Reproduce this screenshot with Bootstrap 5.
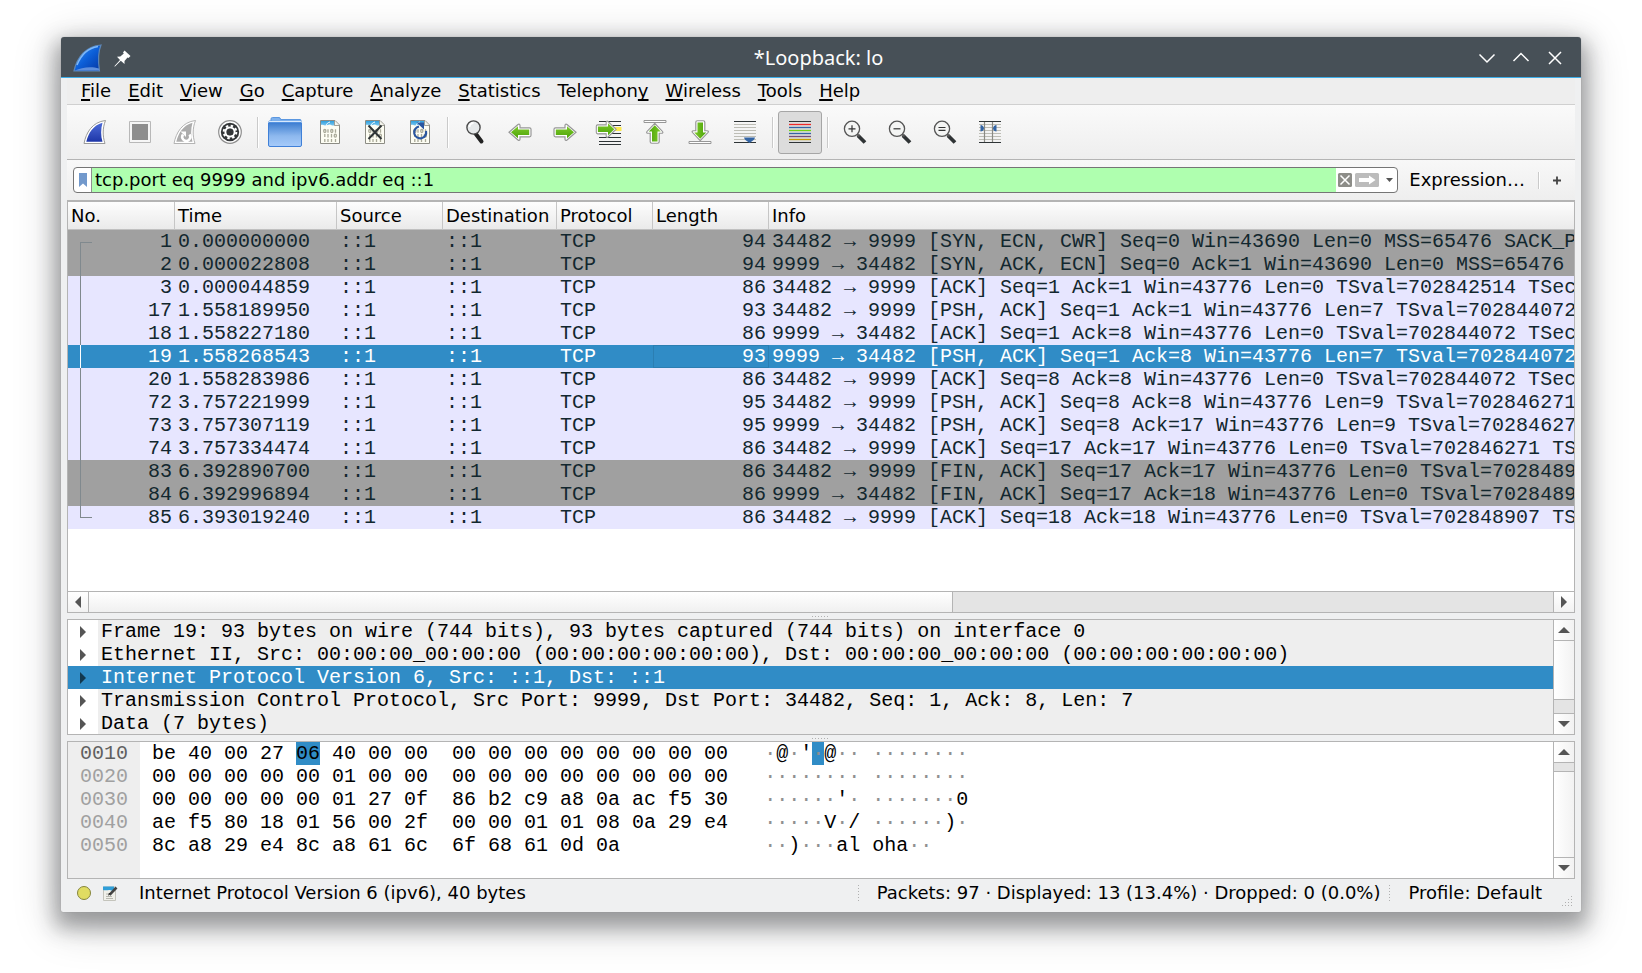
<!DOCTYPE html>
<html lang="en">
<head>
<meta charset="utf-8">
<meta name="viewport" content="width=device-width, initial-scale=1">
<title>*Loopback: lo</title>
<link href="https://cdn.jsdelivr.net/npm/bootstrap@5.3.0/dist/css/bootstrap.min.css" rel="stylesheet">
<style>
  :root { --line: #b4b4b4; --face: #eeeeee; --sel: #308cc6; --mono: "Liberation Mono", monospace; }
  body { background: #fff; color: #000; font: 18px/26px "DejaVu Sans", sans-serif; }
  .desk { height: 100vh; min-height: 800px; padding: 37px 61px 61px; overflow: hidden; }
  .win { background: #eff0f1; border-radius: 4px 4px 2px 2px;
    box-shadow: 0 0 1px #888, 0 10px 20px 6px rgba(35,38,41,.36), 0 10px 44px 4px rgba(35,38,41,.22); }
  .titlebar { height: 41px; background: #475057; border-bottom: 1px solid #3daee9; border-radius: 3px 3px 0 0;
    color: #fcfcfc; font: 20px/40px "Noto Sans", sans-serif; padding: 2px 17px 0 12px; }
  .title-side { width: 108px; gap: 12px; }
  .client { padding: 0 6px 0; }
  .plain { background: none; border: 0; padding: 0; color: inherit; display: inline-flex; align-items: center; justify-content: center; }
  svg { display: block; flex: none; overflow: visible; }

  .menubar { height: 27px; padding-left: 14px; gap: 17px; border-bottom: 1px solid #d0d0d0; background: var(--face); }
  .menubar a { color: #000; text-decoration: none; }
  u { text-decoration: underline 2px; text-underline-offset: 2px; text-decoration-skip-ink: none; }

  .tools { height: 55px; padding-left: 5px; border-bottom: 1px solid var(--line); background: linear-gradient(#fafafa, #eeeeee); }
  .tools button { width: 45px; height: 43px; }
  .tools .pressed { background: #dcdcdc; border: 1px solid #a6a6a6; border-radius: 3px; width: 44px; margin-left: 1px; }
  .vsep { width: 10px; height: 31px; background: linear-gradient(#cacaca, #cacaca) 5px 0/1px 100% no-repeat, linear-gradient(#fff, #fff) 6px 0/1px 100% no-repeat; }

  .filterbar { height: 41px; padding: 0 6px; border-bottom: 1px solid var(--line); background: linear-gradient(#f8f8f8, #eeeeee); }
  .filterbar .vsep { height: 17px; margin-right: 10px; }
  .filterbox { height: 26px; border: 1px solid #757575; border-radius: 4px; background: #fff; overflow: hidden; margin-right: 11px; }
  .filterbox .mark-btn { width: 18px; height: 24px; border-right: 1px solid #909090; }
  .filterbox input { height: 24px; border: 0; outline: 0; padding: 0 0 0 3px; background: #afffaf; min-width: 0; color: #000; }
  .filterbox .ends { width: 61px; gap: 3px; padding-left: 2px; }

  .pane { border: 1px solid var(--line); }
  .packets { table-layout: fixed; border-collapse: separate; border-spacing: 0; font: 20px/23px var(--mono); }
  .packets th { height: 28px; padding: 0 3px; font: 18px/27px "DejaVu Sans", sans-serif; color: #000;
    border-right: 1px solid #c6c6c6; border-bottom: 1px solid #c0c0c0; background: linear-gradient(#fdfdfd, #eaeaea); white-space: nowrap; }
  .packets th:last-child { border-right: 0; }
  .packets td { height: 23px; padding: 0 3px; color: #12272e; background: #e7e6ff; white-space: pre; overflow: hidden; }
  .packets .dim td { background: #a0a0a0; }
  .packets .sel td { background: var(--sel); color: #fff; }
  .packets .sel td:nth-child(6) { box-shadow: inset 0 0 0 1px #2b7eb2; }
  .packets td:first-child, .packets td:nth-child(6) { text-align: right; }
  .packets td:first-child { position: relative; }
  .packets td:first-child::before { content: ""; position: absolute; left: 12px; top: 0; height: 100%; width: 12px; border-left: 1px solid #80898e; }
  .packets tr:first-child td:first-child::before { top: 50%; height: 50%; border-top: 1px solid #80898e; }
  .packets tr:last-child td:first-child::before { height: 50%; border-bottom: 1px solid #80898e; }
  .packets .sel td:first-child::before { border-color: #fff; }

  .hbar { height: 21px; border-top: 1px solid var(--line); background: #e4e4e4; }
  .hbar button { width: 20px; height: 20px; background: linear-gradient(#fff, #f2f2f2); }
  .hbar .thumb { flex: 59 0 0; background: linear-gradient(#fff, #f0f0f0); border-left: 1px solid var(--line); border-right: 1px solid var(--line); }
  .hbar .track { flex: 41 0 0; border-right: 1px solid var(--line); }
  .vbar { flex: none; width: 21px; border-left: 1px solid var(--line); background: #e4e4e4; }
  .vbar button { width: 20px; height: 20px; background: linear-gradient(90deg, #fff, #f2f2f2); }
  .vbar .thumb { background: linear-gradient(90deg, #fff, #f2f2f2); border: solid var(--line); border-width: 1px 0; }
  .vbar .rest { height: 14px; border-bottom: 1px solid var(--line); }
  .vbar .rest-top { height: 9px; border-top: 1px solid var(--line); }

  .grip { height: 6px; }
  .grip i { width: 18px; height: 1px; background: repeating-linear-gradient(90deg, #b0b0b0 0 1px, transparent 1px 3px); }

  .tree { height: 116px; font: 20px/23px var(--mono); background: var(--face); overflow: hidden; }
  .tree .rows button { display: flex; width: 100%; height: 23px; justify-content: flex-start; white-space: pre; }
  .tree .tick { width: 30px; height: 23px; padding-left: 12px; background: #fff; margin-right: 3px; }
  .tree .sel { background: var(--sel); color: #fff; }
  .tree .sel .tick { background: none; }

  .hexpane { height: 138px; background: #fff; }
  .hexpane pre { font: 20px/23px var(--mono); margin: 0; overflow: hidden; color: #000; }
  .hexpane .offs { width: 72px; padding-left: 12px; background: var(--face); color: #a0a0a0; }
  .hexpane .offs b { font-weight: 400; color: #606060; }
  .hexpane .bytes { padding-left: 12px; }
  .hexpane .ascii { padding-left: 36px; }
  .hexpane em { font-style: normal; background: var(--sel); display: inline-block; height: 23px; vertical-align: top; }
  .hexpane s { text-decoration: none; color: #909090; }

  .statusbar { height: 33px; padding: 0 2px 5px 10px; }
  .statusbar .note-btn { margin: 0 21px 0 12px; }
  .statusbar .dotsep { margin: 0 18px 0 9px; width: 1px; height: 17px; background: repeating-linear-gradient(#b0b0b0 0 1px, transparent 1px 3px); }
  .statusbar .size-grip { margin-left: 20px; }
</style>
</head>
<body>
<svg width="0" height="0" class="position-absolute" aria-hidden="true">
  <defs>
    <linearGradient id="gFin" x1="0" y1="0" x2="1" y2="1"><stop offset="0" stop-color="#3f95f5"/><stop offset=".5" stop-color="#0c5fd8"/><stop offset="1" stop-color="#0635a0"/></linearGradient>
    <linearGradient id="gFin2" x1="0" y1="0" x2="0" y2="1"><stop offset="0" stop-color="#4d6bd8"/><stop offset="1" stop-color="#1d36a8"/></linearGradient>
    <linearGradient id="gFold" x1="0" y1="0" x2="0" y2="1"><stop offset="0" stop-color="#3f7fd0"/><stop offset=".55" stop-color="#8db8ee"/><stop offset="1" stop-color="#a6cbfa"/></linearGradient>
    <linearGradient id="gGreen" x1="0" y1="0" x2="0" y2="1"><stop offset="0" stop-color="#7cc928"/><stop offset="1" stop-color="#4ea40a"/></linearGradient>
    <linearGradient id="gBlue" x1="0" y1="0" x2="0" y2="1"><stop offset="0" stop-color="#2fa0dd"/><stop offset="1" stop-color="#7cc6ee"/></linearGradient>
    <symbol id="page" viewBox="0 0 24 24" overflow="visible">
      <path d="M2.500 .5H17l4.500 4.500V23.500H2.500Z" fill="#fdfdf3" stroke="#8c8c84"/>
      <path d="M3 1H16.500V5.500H14C11 3.500 10 5.500 8 5.500C6 5.500 5 4 3 5Z" fill="url(#gBlue)"/>
      <path d="M8 6C8.500 3.500 10 2.500 12 2" fill="none" stroke="#fff"/>
      <path d="M16.500 .8V5.500H21.300" fill="#f4f4ec" stroke="#8c8c84" stroke-width=".8"/>
      <g stroke="#a9a998" fill="none" stroke-width="1.300">
        <ellipse cx="6.800" cy="11" rx="1.100" ry="1.500"/><path d="M10 9.200v3.600M17.500 9.200v3.600M10 14v3.600M13.500 14v3.600M6.800 19v3M10 19v3M13.500 19v3M6.800 14v3"/><ellipse cx="13.800" cy="11" rx="1.100" ry="1.500"/><ellipse cx="17.300" cy="15.700" rx="1.100" ry="1.500"/><path d="M17.500 19v3"/>
      </g>
    </symbol>
    <symbol id="arrow" viewBox="0 0 24 24" overflow="visible">
      <path d="M1 12.200L10 4.500c1-.8 2-.3 2 1v2.300h9.500q1.500 0 1.500 1.500v6q0 1.500-1.500 1.500H12V19c0 1.300-1 1.800-2 1z" fill="#fff" stroke="#979797" stroke-width="1.200"/>
      <path d="M3 12.200L10 6.300V9.500H21.200V15H10v3.200Z" fill="url(#gGreen)"/>
    </symbol>
    <symbol id="lens" viewBox="0 0 24 24" overflow="visible">
      <path d="M15 15.500L22 22.500" stroke="#2f3335" stroke-width="3.800" stroke-linecap="butt"/><path d="M13.500 13.500l3 3" stroke="#555" stroke-width="2"/>
      <circle cx="9" cy="8.800" r="7.600" fill="#f4f5f4" stroke="#555" stroke-width="1.300"/>
    </symbol>
  </defs>
</svg>

<div class="desk">
<div class="win d-flex flex-column h-100">
  <header class="titlebar d-flex align-items-center justify-content-between">
    <div class="title-side d-flex align-items-center">
      <svg width="29" height="28" viewBox="0 0 29 28"><path d="M1 27C4 13 13 2 28 1C25 8 25 17 26.500 27Z" fill="url(#gFin)" stroke="#5d87b8" stroke-width="1.200"/><path d="M2 26.500C8 23.500 18 22 26 24.500v2Z" fill="#5f8fdc"/><path d="M4 21C8 11 15 4 25 2.500" fill="none" stroke="#7db8f8" stroke-width="1.500"/></svg>
      <svg width="17" height="17" viewBox="0 0 17 17"><path d="M10.500 0.500L16.500 6L14.500 8L13.500 7.500L10.500 11L10.500 14L6.800 10.800L1 16.500H.5V16L6 10L3 6.800L6.300 6.500L9.800 3.500L9 2.500Z" fill="#fff"/></svg>
    </div>
    <span>*Loopback: lo</span>
    <div class="title-side d-flex justify-content-end gap-3">
      <button class="plain" aria-label="Minimize"><svg width="18" height="16" viewBox="0 0 18 16"><path d="M1.500 4.500L9 12L16.500 4.500" fill="none" stroke="#fff" stroke-width="1.500"/></svg></button>
      <button class="plain" aria-label="Maximize"><svg width="18" height="16" viewBox="0 0 18 16"><path d="M1.500 11L9 3.500L16.500 11" fill="none" stroke="#fff" stroke-width="1.500"/></svg></button>
      <button class="plain" aria-label="Close"><svg width="18" height="16" viewBox="0 0 18 16"><path d="M3 2L15 14M15 2L3 14" fill="none" stroke="#fff" stroke-width="1.500"/></svg></button>
    </div>
  </header>

  <main class="client d-flex flex-column flex-grow-1">
    <nav class="menubar d-flex">
      <a href="#"><u>F</u>ile</a><a href="#"><u>E</u>dit</a><a href="#"><u>V</u>iew</a><a href="#"><u>G</u>o</a><a href="#"><u>C</u>apture</a><a href="#"><u>A</u>nalyze</a><a href="#"><u>S</u>tatistics</a><a href="#">Telephon<u>y</u></a><a href="#"><u>W</u>ireless</a><a href="#"><u>T</u>ools</a><a href="#"><u>H</u>elp</a>
    </nav>

    <div class="tools d-flex align-items-center">
      <button class="plain" aria-label="Start capture"><svg width="24" height="24" viewBox="0 0 24 24"><path d="M1 23.500C3 13 9 2 22.500 .5C19.500 8 19.500 16 22 23.500Z" fill="#fff" stroke="#9a9a9a"/><path d="M3.300 21.800C5.500 13 10 5.500 19.500 2.800C17.700 9 17.700 16 19.500 21.800Z" fill="url(#gFin2)"/></svg></button>
      <button class="plain" aria-label="Stop capture"><svg width="24" height="24" viewBox="0 0 24 24"><path d="M1.500 1.500h21v21h-21z" fill="#f6f6f6" stroke="#b8b8b8"/><path d="M4 4h16v16H4z" fill="#8e8e8e"/></svg></button>
      <button class="plain" aria-label="Restart capture"><svg width="24" height="24" viewBox="0 0 24 24"><path d="M1 23.500C3 13 9 2 22.500 .5C19.500 8 19.500 16 22 23.500Z" fill="#fff" stroke="#b4b4b4"/><path d="M3.300 21.800C5.500 13 10 5.500 19.500 2.800C17.700 9 17.700 16 19.500 21.800Z" fill="#adadad"/><path d="M10 14.500a4 4 0 1 0 6.500 0" fill="none" stroke="#fff" stroke-width="2.500"/><path d="M7.500 11.500h5.500v5.500z" fill="#fff"/></svg></button>
      <button class="plain" aria-label="Capture options"><svg width="24" height="24" viewBox="0 0 24 24"><circle cx="12" cy="12" r="11.300" fill="#fff" stroke="#8f8f8f" stroke-width="1.200"/><circle cx="12" cy="12" r="9.200" fill="#333638"/><circle cx="12" cy="12" r="4.600" fill="none" stroke="#fff" stroke-width="2"/><circle cx="12" cy="12" r="6.300" fill="none" stroke="#fff" stroke-width="2" stroke-dasharray="2.470 2.470"/><circle cx="12" cy="12" r="3.200" fill="#333638"/></svg></button>
      <span class="vsep"></span>
      <button class="plain" aria-label="Open"><svg width="34" height="30" viewBox="0 0 34 30"><path d="M3 4V2q0-1.500 1.500-1.500H11q1.500 0 1.500 2H32q1 0 1 1V6H1V4Z" fill="#7db0ec" stroke="#5b97e0"/><path d="M1 4.500H33" stroke="#d8e9fc"/><path d="M.5 6H33.500V28q0 1.500-1.500 1.500H2Q.5 29.500 .5 28Z" fill="url(#gFold)" stroke="#3f80d8"/></svg></button>
      <button class="plain" aria-label="Save"><svg width="24" height="24"><use href="#page"/></svg></button>
      <button class="plain" aria-label="Close file"><svg width="24" height="24"><use href="#page"/><path d="M5.500 5.500L18.500 19M18.500 5.500L5.500 19" stroke="#2e3436" stroke-width="2"/></svg></button>
      <button class="plain" aria-label="Reload"><svg width="24" height="24"><use href="#page"/><path d="M11 6.500a6 6 0 1 0 7 4.500" fill="none" stroke="#2a56a0" stroke-width="2.200"/><path d="M8.500 2.500H16V9.500Z" fill="#2a56a0"/></svg></button>
      <span class="vsep"></span>
      <button class="plain" aria-label="Find"><svg width="24" height="24" viewBox="0 0 24 24"><path d="M12.500 13.500L18.500 21.500" stroke="#222" stroke-width="4" stroke-linecap="round"/><circle cx="10.500" cy="7.500" r="6.600" fill="#e6e9ea" stroke="#4b4b4b" stroke-width="1.400"/><path d="M6.500 7a4 4 0 0 1 4-4" fill="none" stroke="#fff" stroke-width="1.800"/></svg></button>
      <button class="plain" aria-label="Back"><svg width="24" height="24"><use href="#arrow"/></svg></button>
      <button class="plain" aria-label="Forward"><svg width="24" height="24"><use href="#arrow" transform="matrix(-1 0 0 1 24 0)"/></svg></button>
      <button class="plain" aria-label="Go to packet"><svg width="24" height="24"><path d="M1 1.500h22M1 5.500h22M1 13.500h22M1 17.500h22M1 21.500h22M1 24.500h22" stroke="#2e3436" stroke-width="1.200"/><path d="M17 7h6.500v4H17z" fill="#fce94f"/><use href="#arrow" transform="matrix(-.9 0 0 1 19 -3)"/></svg></button>
      <button class="plain" aria-label="First packet"><svg width="24" height="24"><path d="M1 .5h22v2H1z" fill="#fff" stroke="#979797"/><use href="#arrow" transform="matrix(0 .9 -1 0 24 2.500)"/></svg></button>
      <button class="plain" aria-label="Last packet"><svg width="24" height="24"><path d="M1 21.500h22v2H1z" fill="#fff" stroke="#979797"/><use href="#arrow" transform="matrix(0 -.9 1 0 0 21.500)"/></svg></button>
      <button class="plain" aria-label="Auto scroll"><svg width="24" height="24"><path d="M1 4.500h22M1 7.500h22M1 10.500h22M1 13.500h22M1 16.500h22M1 19.500h22" stroke="#bdbdb5"/><path d="M1 1.500h22M1 22.500h22" stroke="#2e3436" stroke-width="1.200"/><path d="M11 17.500h11q0 2-5.500 5.500Q11 19.500 11 17.500Z" fill="#3465a4"/></svg></button>
      <span class="vsep"></span>
      <button class="plain pressed" aria-label="Colorize" aria-pressed="true"><svg width="24" height="24" fill="none"><path d="M1 1.500h22M1 22.500h22" stroke="#2e3436"/><path d="M1 4.500h22" stroke="#ef2929" stroke-width="1.300"/><path d="M1 7.500h22" stroke="#3465a4" stroke-width="1.300"/><path d="M1 10.500h22" stroke="#73d216" stroke-width="1.300"/><path d="M1 13.500h22" stroke="#3465a4" stroke-width="1.300"/><path d="M1 16.500h22" stroke="#75507b" stroke-width="1.300"/><path d="M1 19.500h22" stroke="#c4a000" stroke-width="1.300"/></svg></button>
      <span class="vsep"></span>
      <button class="plain" aria-label="Zoom in"><svg width="24" height="24"><use href="#lens"/><path d="M5.500 8.800h7M9 5.300v7" stroke="#333" stroke-width="1.200"/></svg></button>
      <button class="plain" aria-label="Zoom out"><svg width="24" height="24"><use href="#lens"/><path d="M5.500 8.800h7" stroke="#333" stroke-width="1.200"/></svg></button>
      <button class="plain" aria-label="Normal size"><svg width="24" height="24"><use href="#lens"/><path d="M5.500 7.500h7M5.500 10.300h7" stroke="#333" stroke-width="1.200"/></svg></button>
      <button class="plain" aria-label="Resize columns"><svg width="24" height="24"><path d="M1 4.500h22M1 7.500h22M1 10.500h22M1 13.500h22M1 16.500h22M1 19.500h22" stroke="#bdbdb5"/><path d="M1 1.500h22M1 22.500h22" stroke="#2e3436" stroke-width="1.200"/><path d="M6.500 2v20M14.500 2v20" stroke="#8a8a84" stroke-width="1.200"/><path d="M2.500 5q3 0 3.500 3.500Q5.500 11.500 2.500 11.500Z M18.500 5q-3 0-3.500 3.500q.5 3 3.500 3Z" fill="#3465a4"/></svg></button>
    </div>

    <div class="filterbar d-flex align-items-center">
      <div class="filterbox d-flex align-items-center flex-grow-1">
        <button class="plain mark-btn" aria-label="Bookmark"><svg width="8" height="14"><path d="M0 0h8v14L4 10.500L0 14Z" fill="#7299cc"/></svg></button>
        <input class="flex-grow-1" type="text" value="tcp.port eq 9999 and ipv6.addr eq ::1" aria-label="Display filter" spellcheck="false">
        <div class="ends d-flex align-items-center">
          <button class="plain" aria-label="Clear"><svg width="14" height="14"><rect width="14" height="14" rx="1.500" fill="#8d8d88"/><path d="M2.500 2.500l9 9M11.500 2.500l-9 9" stroke="#fff" stroke-width="1.500"/></svg></button>
          <button class="plain" aria-label="Apply"><svg width="24" height="14"><rect width="24" height="14" rx="1.500" fill="#bcbcbc"/><path d="M4 5h10V2.500L20.500 7L14 11.500V9H4Z" fill="#fff"/></svg></button>
          <button class="plain ms-1" aria-label="Filter history"><svg width="8" height="4"><path d="M0 0h7L3.500 4Z" fill="#555"/></svg></button>
        </div>
      </div>
      <button class="plain">Expression…</button>
      <span class="vsep ms-2"></span>
      <button class="plain me-2" aria-label="Add filter button"><svg width="8" height="9"><path d="M0 4.500h8M4 .5v8" stroke="#444" stroke-width="1.800"/></svg></button>
    </div>

    <section class="pane flex-grow-1 d-flex flex-column bg-white overflow-hidden">
      <table class="table table-borderless packets m-0">
        <colgroup><col style="width:107px"><col style="width:162px"><col style="width:106px"><col style="width:114px"><col style="width:96px"><col style="width:116px"><col></colgroup>
        <thead><tr><th>No.</th><th>Time</th><th>Source</th><th>Destination</th><th>Protocol</th><th>Length</th><th>Info</th></tr></thead>
        <tbody>
          <tr class="dim"><td>1</td><td>0.000000000</td><td>::1</td><td>::1</td><td>TCP</td><td>94</td><td>34482 → 9999 [SYN, ECN, CWR] Seq=0 Win=43690 Len=0 MSS=65476 SACK_P</td></tr>
          <tr class="dim"><td>2</td><td>0.000022808</td><td>::1</td><td>::1</td><td>TCP</td><td>94</td><td>9999 → 34482 [SYN, ACK, ECN] Seq=0 Ack=1 Win=43690 Len=0 MSS=65476</td></tr>
          <tr><td>3</td><td>0.000044859</td><td>::1</td><td>::1</td><td>TCP</td><td>86</td><td>34482 → 9999 [ACK] Seq=1 Ack=1 Win=43776 Len=0 TSval=702842514 TSec</td></tr>
          <tr><td>17</td><td>1.558189950</td><td>::1</td><td>::1</td><td>TCP</td><td>93</td><td>34482 → 9999 [PSH, ACK] Seq=1 Ack=1 Win=43776 Len=7 TSval=702844072</td></tr>
          <tr><td>18</td><td>1.558227180</td><td>::1</td><td>::1</td><td>TCP</td><td>86</td><td>9999 → 34482 [ACK] Seq=1 Ack=8 Win=43776 Len=0 TSval=702844072 TSec</td></tr>
          <tr class="sel"><td>19</td><td>1.558268543</td><td>::1</td><td>::1</td><td>TCP</td><td>93</td><td>9999 → 34482 [PSH, ACK] Seq=1 Ack=8 Win=43776 Len=7 TSval=702844072</td></tr>
          <tr><td>20</td><td>1.558283986</td><td>::1</td><td>::1</td><td>TCP</td><td>86</td><td>34482 → 9999 [ACK] Seq=8 Ack=8 Win=43776 Len=0 TSval=702844072 TSec</td></tr>
          <tr><td>72</td><td>3.757221999</td><td>::1</td><td>::1</td><td>TCP</td><td>95</td><td>34482 → 9999 [PSH, ACK] Seq=8 Ack=8 Win=43776 Len=9 TSval=702846271</td></tr>
          <tr><td>73</td><td>3.757307119</td><td>::1</td><td>::1</td><td>TCP</td><td>95</td><td>9999 → 34482 [PSH, ACK] Seq=8 Ack=17 Win=43776 Len=9 TSval=70284627</td></tr>
          <tr><td>74</td><td>3.757334474</td><td>::1</td><td>::1</td><td>TCP</td><td>86</td><td>34482 → 9999 [ACK] Seq=17 Ack=17 Win=43776 Len=0 TSval=702846271 TS</td></tr>
          <tr class="dim"><td>83</td><td>6.392890700</td><td>::1</td><td>::1</td><td>TCP</td><td>86</td><td>34482 → 9999 [FIN, ACK] Seq=17 Ack=17 Win=43776 Len=0 TSval=7028489</td></tr>
          <tr class="dim"><td>84</td><td>6.392996894</td><td>::1</td><td>::1</td><td>TCP</td><td>86</td><td>9999 → 34482 [FIN, ACK] Seq=17 Ack=18 Win=43776 Len=0 TSval=7028489</td></tr>
          <tr><td>85</td><td>6.393019240</td><td>::1</td><td>::1</td><td>TCP</td><td>86</td><td>34482 → 9999 [ACK] Seq=18 Ack=18 Win=43776 Len=0 TSval=702848907 TS</td></tr>
        </tbody>
      </table>
      <div class="hbar d-flex mt-auto">
        <button class="plain" aria-label="Scroll left"><svg width="6" height="12"><path d="M6 0v12L0 6Z" fill="#555"/></svg></button>
        <div class="thumb"></div>
        <div class="track"></div>
        <button class="plain" aria-label="Scroll right"><svg width="6" height="12"><path d="M0 0v12L6 6Z" fill="#555"/></svg></button>
      </div>
    </section>

    <div class="grip d-flex justify-content-center align-items-center"><i></i></div>

    <section class="pane tree d-flex">
      <div class="rows flex-grow-1">
        <button class="plain"><span class="tick d-flex align-items-center"><svg width="6" height="12"><path d="M0 0v12L6 6Z" fill="#555"/></svg></span>Frame 19: 93 bytes on wire (744 bits), 93 bytes captured (744 bits) on interface 0</button>
        <button class="plain"><span class="tick d-flex align-items-center"><svg width="6" height="12"><path d="M0 0v12L6 6Z" fill="#555"/></svg></span>Ethernet II, Src: 00:00:00_00:00:00 (00:00:00:00:00:00), Dst: 00:00:00_00:00:00 (00:00:00:00:00:00)</button>
        <button class="plain sel"><span class="tick d-flex align-items-center"><svg width="6" height="12"><path d="M0 0v12L6 6Z" fill="#12384f"/></svg></span>Internet Protocol Version 6, Src: ::1, Dst: ::1</button>
        <button class="plain"><span class="tick d-flex align-items-center"><svg width="6" height="12"><path d="M0 0v12L6 6Z" fill="#555"/></svg></span>Transmission Control Protocol, Src Port: 9999, Dst Port: 34482, Seq: 1, Ack: 8, Len: 7</button>
        <button class="plain"><span class="tick d-flex align-items-center"><svg width="6" height="12"><path d="M0 0v12L6 6Z" fill="#555"/></svg></span>Data (7 bytes)</button>
      </div>
      <div class="vbar d-flex flex-column">
        <button class="plain" aria-label="Scroll up"><svg width="12" height="6"><path d="M0 6h12L6 0Z" fill="#555"/></svg></button>
        <div class="thumb flex-grow-1"></div>
        <div class="rest"></div>
        <button class="plain" aria-label="Scroll down"><svg width="12" height="6"><path d="M0 0h12L6 6Z" fill="#555"/></svg></button>
      </div>
    </section>

    <div class="grip d-flex justify-content-center align-items-center"><i></i></div>

    <section class="pane hexpane d-flex">
<pre class="offs"><b>0010</b>
0020
0030
0040
0050</pre>
<pre class="bytes">be 40 00 27 <em>06</em> 40 00 00  00 00 00 00 00 00 00 00
00 00 00 00 00 01 00 00  00 00 00 00 00 00 00 00
00 00 00 00 00 01 27 0f  86 b2 c9 a8 0a ac f5 30
ae f5 80 18 01 56 00 2f  00 00 01 01 08 0a 29 e4
8c a8 29 e4 8c a8 61 6c  6f 68 61 0d 0a</pre>
<pre class="ascii flex-grow-1"><s>·</s>@<s>·</s>'<em><s>·</s></em>@<s>·· ········</s>
<s>········ ········</s>
<s>······</s>'<s>· ·······</s>0
<s>·····</s>V<s>·</s>/ <s>······</s>)<s>·</s>
<s>··</s>)<s>···</s>al oha<s>··</s></pre>
      <div class="vbar d-flex flex-column">
        <button class="plain" aria-label="Scroll up"><svg width="12" height="6"><path d="M0 6h12L6 0Z" fill="#555"/></svg></button>
        <div class="rest-top"></div>
        <div class="thumb flex-grow-1"></div>
        <button class="plain" aria-label="Scroll down"><svg width="12" height="6"><path d="M0 0h12L6 6Z" fill="#555"/></svg></button>
      </div>
    </section>

    <footer class="statusbar d-flex align-items-center">
      <button class="plain" aria-label="Expert info"><svg width="14" height="14"><circle cx="7" cy="7" r="6.500" fill="#e0dc62" stroke="#85853c"/></svg></button>
      <button class="plain note-btn" aria-label="Capture comment"><svg width="15" height="15"><path d="M.5 1h12v13.500H.5Z" fill="#f0f0ea" stroke="#c4c4bc"/><path d="M0 .5h11v4H8C6 3 4 5 0 4Z" fill="#2f9ed8"/><path d="M3 8h5M3 10.500h6M3 12.500h7" stroke="#b8b8b0"/><path d="M13.500 1.500L6.500 8.800" stroke="#444" stroke-width="2.600"/><path d="M7.500 7.500L5 10l1-3Z" fill="#222"/></svg></button>
      <span class="flex-grow-1">Internet Protocol Version 6 (ipv6), 40 bytes</span>
      <span class="dotsep"></span>
      <span>Packets: 97 · Displayed: 13 (13.4%) · Dropped: 0 (0.0%)</span>
      <span class="dotsep"></span>
      <span>Profile: Default</span>
      <svg class="size-grip align-self-end" width="11" height="11"><path d="M9 .5h1M6 3.500h4M3 6.500h7M0 9.500h10" stroke="#b0b0b0" stroke-dasharray="1 2"/></svg>
    </footer>
  </main>
</div>
</div>
<script src="https://cdn.jsdelivr.net/npm/bootstrap@5.3.0/dist/js/bootstrap.bundle.min.js"></script>
</body>
</html>
